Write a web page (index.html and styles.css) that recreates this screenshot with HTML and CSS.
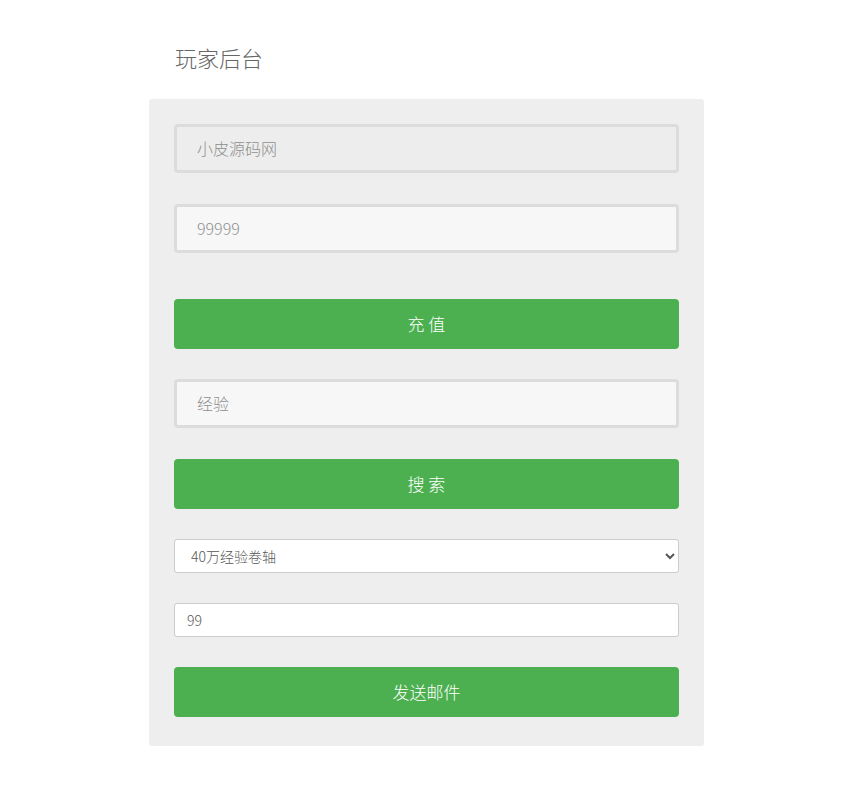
FILE: index.html
```html
<!DOCTYPE html>
<html lang="zh">
<head>
<meta charset="utf-8">
<title>玩家后台</title>
<link rel="stylesheet" href="styles.css">
</head>
<body>
<div class="wrap">
  <h2 class="title">玩家后台</h2>
  <div class="panel">
    <input class="field field-disabled" type="text" placeholder="小皮源码网" disabled>
    <input class="field field-mt" type="text" placeholder="99999">
    <button class="btn btn-mt-lg">充 值</button>
    <input class="field field-mt-s" type="text" placeholder="经验">
    <button class="btn btn-mt">搜 索</button>
    <select class="sel">
      <option>40万经验卷轴</option>
    </select>
    <input class="small-input" type="text" value="99">
    <button class="btn btn-mt-s">发送邮件</button>
  </div>
</div>
</body>
</html>
```
FILE: styles.css
```css
html, body {
  margin: 0;
  padding: 0;
  background: #fff;
}
body {
  font-family: "Noto Sans CJK SC", "Open Sans", sans-serif;
  color: #555;
}
.wrap {
  width: 555px;
  margin-left: 149px;
  padding-top: 41px;
}
.title {
  margin: 0 0 0 26px;
  height: 58px;
  font-size: 22px;
  font-weight: 300;
  line-height: 32px;
  color: #666;
}
.panel {
  background: #eeeeee;
  border-radius: 3px;
  padding: 25px 25px 29px 25px;
  display: flex;
  flex-direction: column;
}
.field {
  box-sizing: border-box;
  width: 505px;
  height: 49px;
  border: 3px solid #dcdcdc;
  border-radius: 4px;
  background: #f7f7f7;
  padding: 0 20px 1px 20px;
  font-family: "Noto Sans CJK SC", "Open Sans", sans-serif;
  font-size: 16px;
  font-weight: 300;
  color: #555;
  outline: none;
}
.field::placeholder {
  color: #8f8f8f;
}
.field-disabled {
  background: #ededed;
}
.field-mt {
  margin-top: 31px;
}
.field-mt-s {
  margin-top: 30px;
}
.btn {
  box-sizing: border-box;
  width: 505px;
  height: 50px;
  border: none;
  border-radius: 4px;
  background: #4caf50;
  color: #fff;
  font-family: "Noto Sans CJK SC", "Open Sans", sans-serif;
  font-size: 17px;
  font-weight: 300;
  padding: 0 0 2px 0;
  cursor: pointer;
}
.btn-mt-lg {
  margin-top: 46px;
}
.btn-mt {
  margin-top: 31px;
}
.btn-mt-s {
  margin-top: 30px;
}
.sel {
  box-sizing: border-box;
  margin-top: 30px;
  width: 505px;
  height: 34px;
  border: 1px solid #ccc;
  border-radius: 3px;
  background: #fff;
  padding: 0 12px;
  font-family: "Noto Sans CJK SC", "Open Sans", sans-serif;
  font-size: 14px;
  font-weight: 300;
  color: #555;
}
.small-input {
  box-sizing: border-box;
  margin-top: 30px;
  width: 505px;
  height: 34px;
  border: 1px solid #ccc;
  border-radius: 3px;
  background: #fff;
  padding: 0 12px;
  font-family: "Noto Sans CJK SC", "Open Sans", sans-serif;
  font-size: 14px;
  font-weight: 300;
  color: #555;
  outline: none;
}
```
